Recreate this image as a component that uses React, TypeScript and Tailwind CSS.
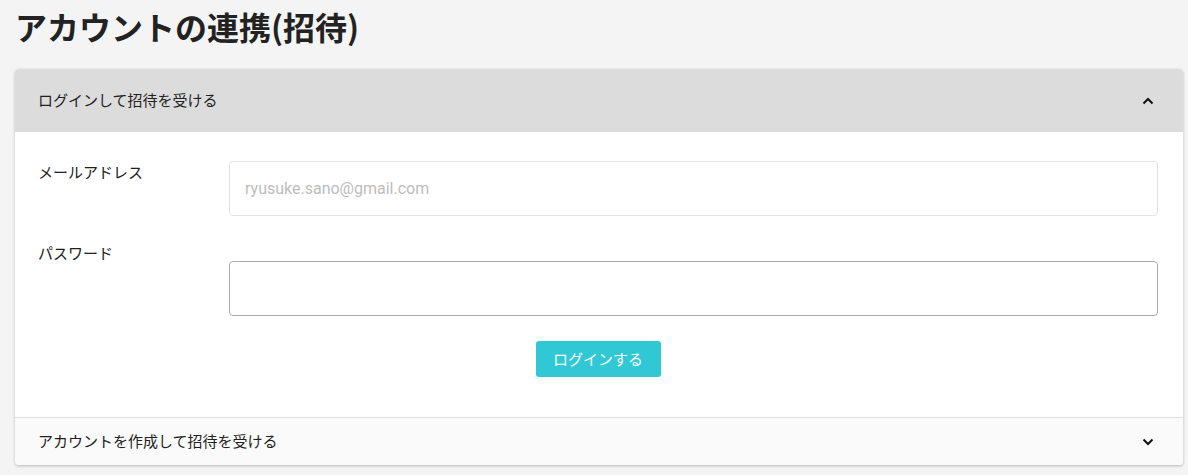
import React, { useState } from "react";

const jp = { fontFamily: '"Noto Sans CJK JP", "Noto Sans", sans-serif' };

function Chevron({ up }: { up: boolean }) {
  return (
    <svg width="12" height="8" viewBox="0 0 12 8" fill="none" stroke="#111" strokeWidth="2">
      {up ? <path d="M1.5 6.5 L6 2 L10.5 6.5" /> : <path d="M1.5 1.5 L6 6 L10.5 1.5" />}
    </svg>
  );
}

export default function App() {
  const [open, setOpen] = useState(true);
  const [password, setPassword] = useState("");

  return (
    <div className="min-h-[475px] bg-[#f4f4f4] pl-[15px] pr-[5px] pt-[3px] pb-[10px] text-[#212121]" style={jp}>
      <h1 className="text-[32px] font-bold leading-[46px] mb-[20px] text-[#222]">アカウントの連携(招待)</h1>

      <div className="rounded-[4px] bg-white shadow-[0_1px_3px_rgba(0,0,0,0.25)] overflow-hidden">
        <button
          className="w-full h-[63px] flex items-center justify-between pl-[23px] pr-[29px] bg-[#dcdcdc] text-[15px] text-left"
          onClick={() => setOpen(o => !o)}
        >
          <span>ログインして招待を受ける</span>
          <Chevron up={open} />
        </button>

        {open && (
          <div className="pt-[29px] pb-[40px] pl-[23px] pr-[25px]">
            <div className="flex mb-[45px]">
              <label className="w-[191px] text-[15px] pt-[1px] leading-[20px]">メールアドレス</label>
              <input
                className="flex-1 h-[55px] rounded-[4px] border border-[#e3e3e3] px-[15px] text-[16px] outline-none placeholder:text-[#bdbdbd]"
                style={{ fontFamily: 'Roboto, "Noto Sans", sans-serif' }}
                placeholder="ryusuke.sano@gmail.com"
              />
            </div>
            <div className="flex mb-[25px]">
              <label className="w-[191px] text-[15px] -mt-[18px] leading-[20px]">パスワード</label>
              <input
                type="password"
                className="flex-1 h-[55px] rounded-[4px] border border-[#a9a9a9] px-[15px] text-[16px] outline-none"
                value={password}
                onChange={e => setPassword(e.target.value)}
              />
            </div>
            <div className="flex justify-center">
              <button className="w-[125px] h-[36px] rounded-[3px] bg-[#31c8d6] text-white text-[15px]">ログインする</button>
            </div>
          </div>
        )}

        <button className="w-full h-[48px] flex items-center justify-between pl-[23px] pr-[29px] bg-[#fafafa] border-t border-[#dedede] text-[15px] text-left">
          <span>アカウントを作成して招待を受ける</span>
          <Chevron up={false} />
        </button>
      </div>
    </div>
  );
}
